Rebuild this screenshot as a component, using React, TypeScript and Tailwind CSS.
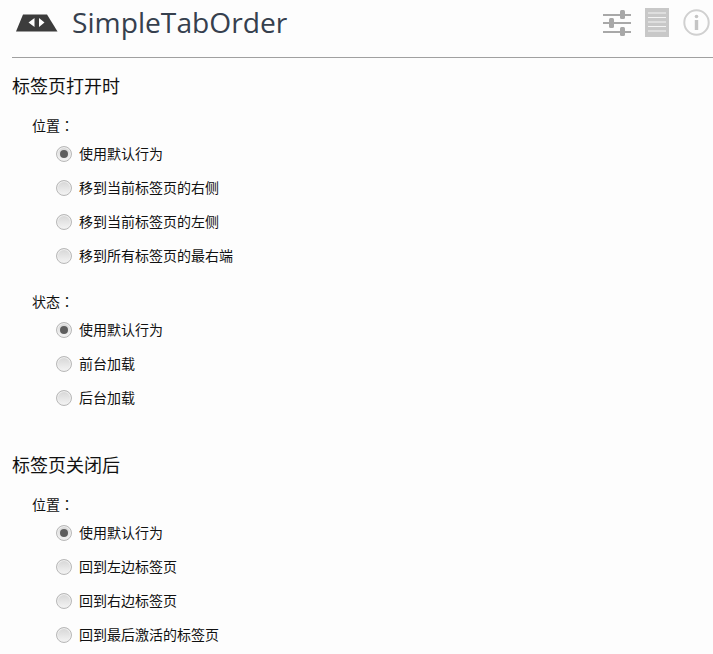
const font = { fontFamily: '"Noto Sans CJK SC", sans-serif' };

const RadioRow = ({ label, checked }: { label: string; checked?: boolean }) => (
  <div className="flex h-[34px] items-center pl-[56px]">
    <span className="mt-[1px] flex h-4 w-4 items-center justify-center rounded-full border border-[#b8b8b8] bg-gradient-to-b from-[#d6d6d6] to-[#f4f4f4] shadow-[inset_0_0_0_1px_#efefef]">
      {checked && <span className="h-2 w-2 rounded-full bg-[#5e5e5e]" />}
    </span>
    <span className="ml-[7px] text-[14px] leading-none text-[#111]">{label}</span>
  </div>
);

const Group = ({ title, options }: { title: string; options: string[] }) => (
  <div>
    <div className="flex h-5 items-center pl-8 text-[14px] text-[#111]" style={{ fontFamily: '"Noto Sans CJK TC", sans-serif' }}>
      {title}
    </div>
    <div className="mt-[1px]">
      {options.map((o, i) => (
        <RadioRow key={o} label={o} checked={i === 0} />
      ))}
    </div>
  </div>
);

export default function App() {
  return (
    <div className="h-[654px] w-[713px] overflow-hidden bg-[#fdfdfd]" style={font}>
      <header className="ml-3 flex h-[58px] items-center border-b border-[#a0a0a0] pb-3">
        <svg width="44" height="18" viewBox="0 0 44 18" className="ml-[3px] mt-[1px]">
          <path d="M8 0.5H32L42.5 17.5H1Z" fill="#3c3c3c" />
          <path d="M19.5 4V13L13.5 8.5Z M24 4V13L29.5 8.5Z" fill="#fdfdfd" />
        </svg>
        <h1 className="ml-[13px] text-[28.2px] font-normal leading-none text-[#36404e]" style={{ fontFamily: '"Open Sans", sans-serif' }}>
          SimpleTabOrder
        </h1>
        <div className="ml-auto flex items-center gap-[14px] pr-[3px]">
          <svg width="28" height="26" viewBox="0 0 28 26" fill="#a8a8a8">
            <rect x="0" y="4" width="28" height="2" />
            <rect x="0" y="12" width="28" height="2" />
            <rect x="0" y="21" width="28" height="2" />
            <rect x="17" y="0" width="5" height="9" rx="1.5" />
            <rect x="6" y="8" width="5" height="10" rx="1.5" />
            <rect x="17" y="17" width="5" height="9" rx="1.5" />
          </svg>
          <svg width="24" height="29" viewBox="0 0 24 29">
            <rect width="24" height="29" fill="#c8c8c8" />
            <path d="M3 5H21M3 9.5H21M3 14H21M3 18.5H21M3 23H21" stroke="#f4f4f4" strokeWidth="1.2" />
          </svg>
          <svg width="27" height="27" viewBox="0 0 27 27" fill="none">
            <circle cx="13.5" cy="13.5" r="12.2" stroke="#d0d0d0" strokeWidth="2" />
            <circle cx="13.5" cy="7.5" r="1.8" fill="#c4c4c4" />
            <rect x="11.8" y="11" width="3.4" height="10" fill="#c4c4c4" />
          </svg>
        </div>
      </header>

      <section>
        <h2 className="ml-3 mt-[15px] text-[18px] font-normal leading-[24px] text-[#111]">标签页打开时</h2>
        <div className="mt-[18px]">
          <Group title="位置：" options={['使用默认行为', '移到当前标签页的右侧', '移到当前标签页的左侧', '移到所有标签页的最右端']} />
        </div>
        <div className="mt-[19px]">
          <Group title="状态：" options={['使用默认行为', '前台加载', '后台加载']} />
        </div>
      </section>

      <section className="mt-[38px]">
        <h2 className="ml-3 text-[18px] font-normal leading-[24px] text-[#111]">标签页关闭后</h2>
        <div className="mt-[18px]">
          <Group title="位置：" options={['使用默认行为', '回到左边标签页', '回到右边标签页', '回到最后激活的标签页']} />
        </div>
      </section>
    </div>
  );
}
